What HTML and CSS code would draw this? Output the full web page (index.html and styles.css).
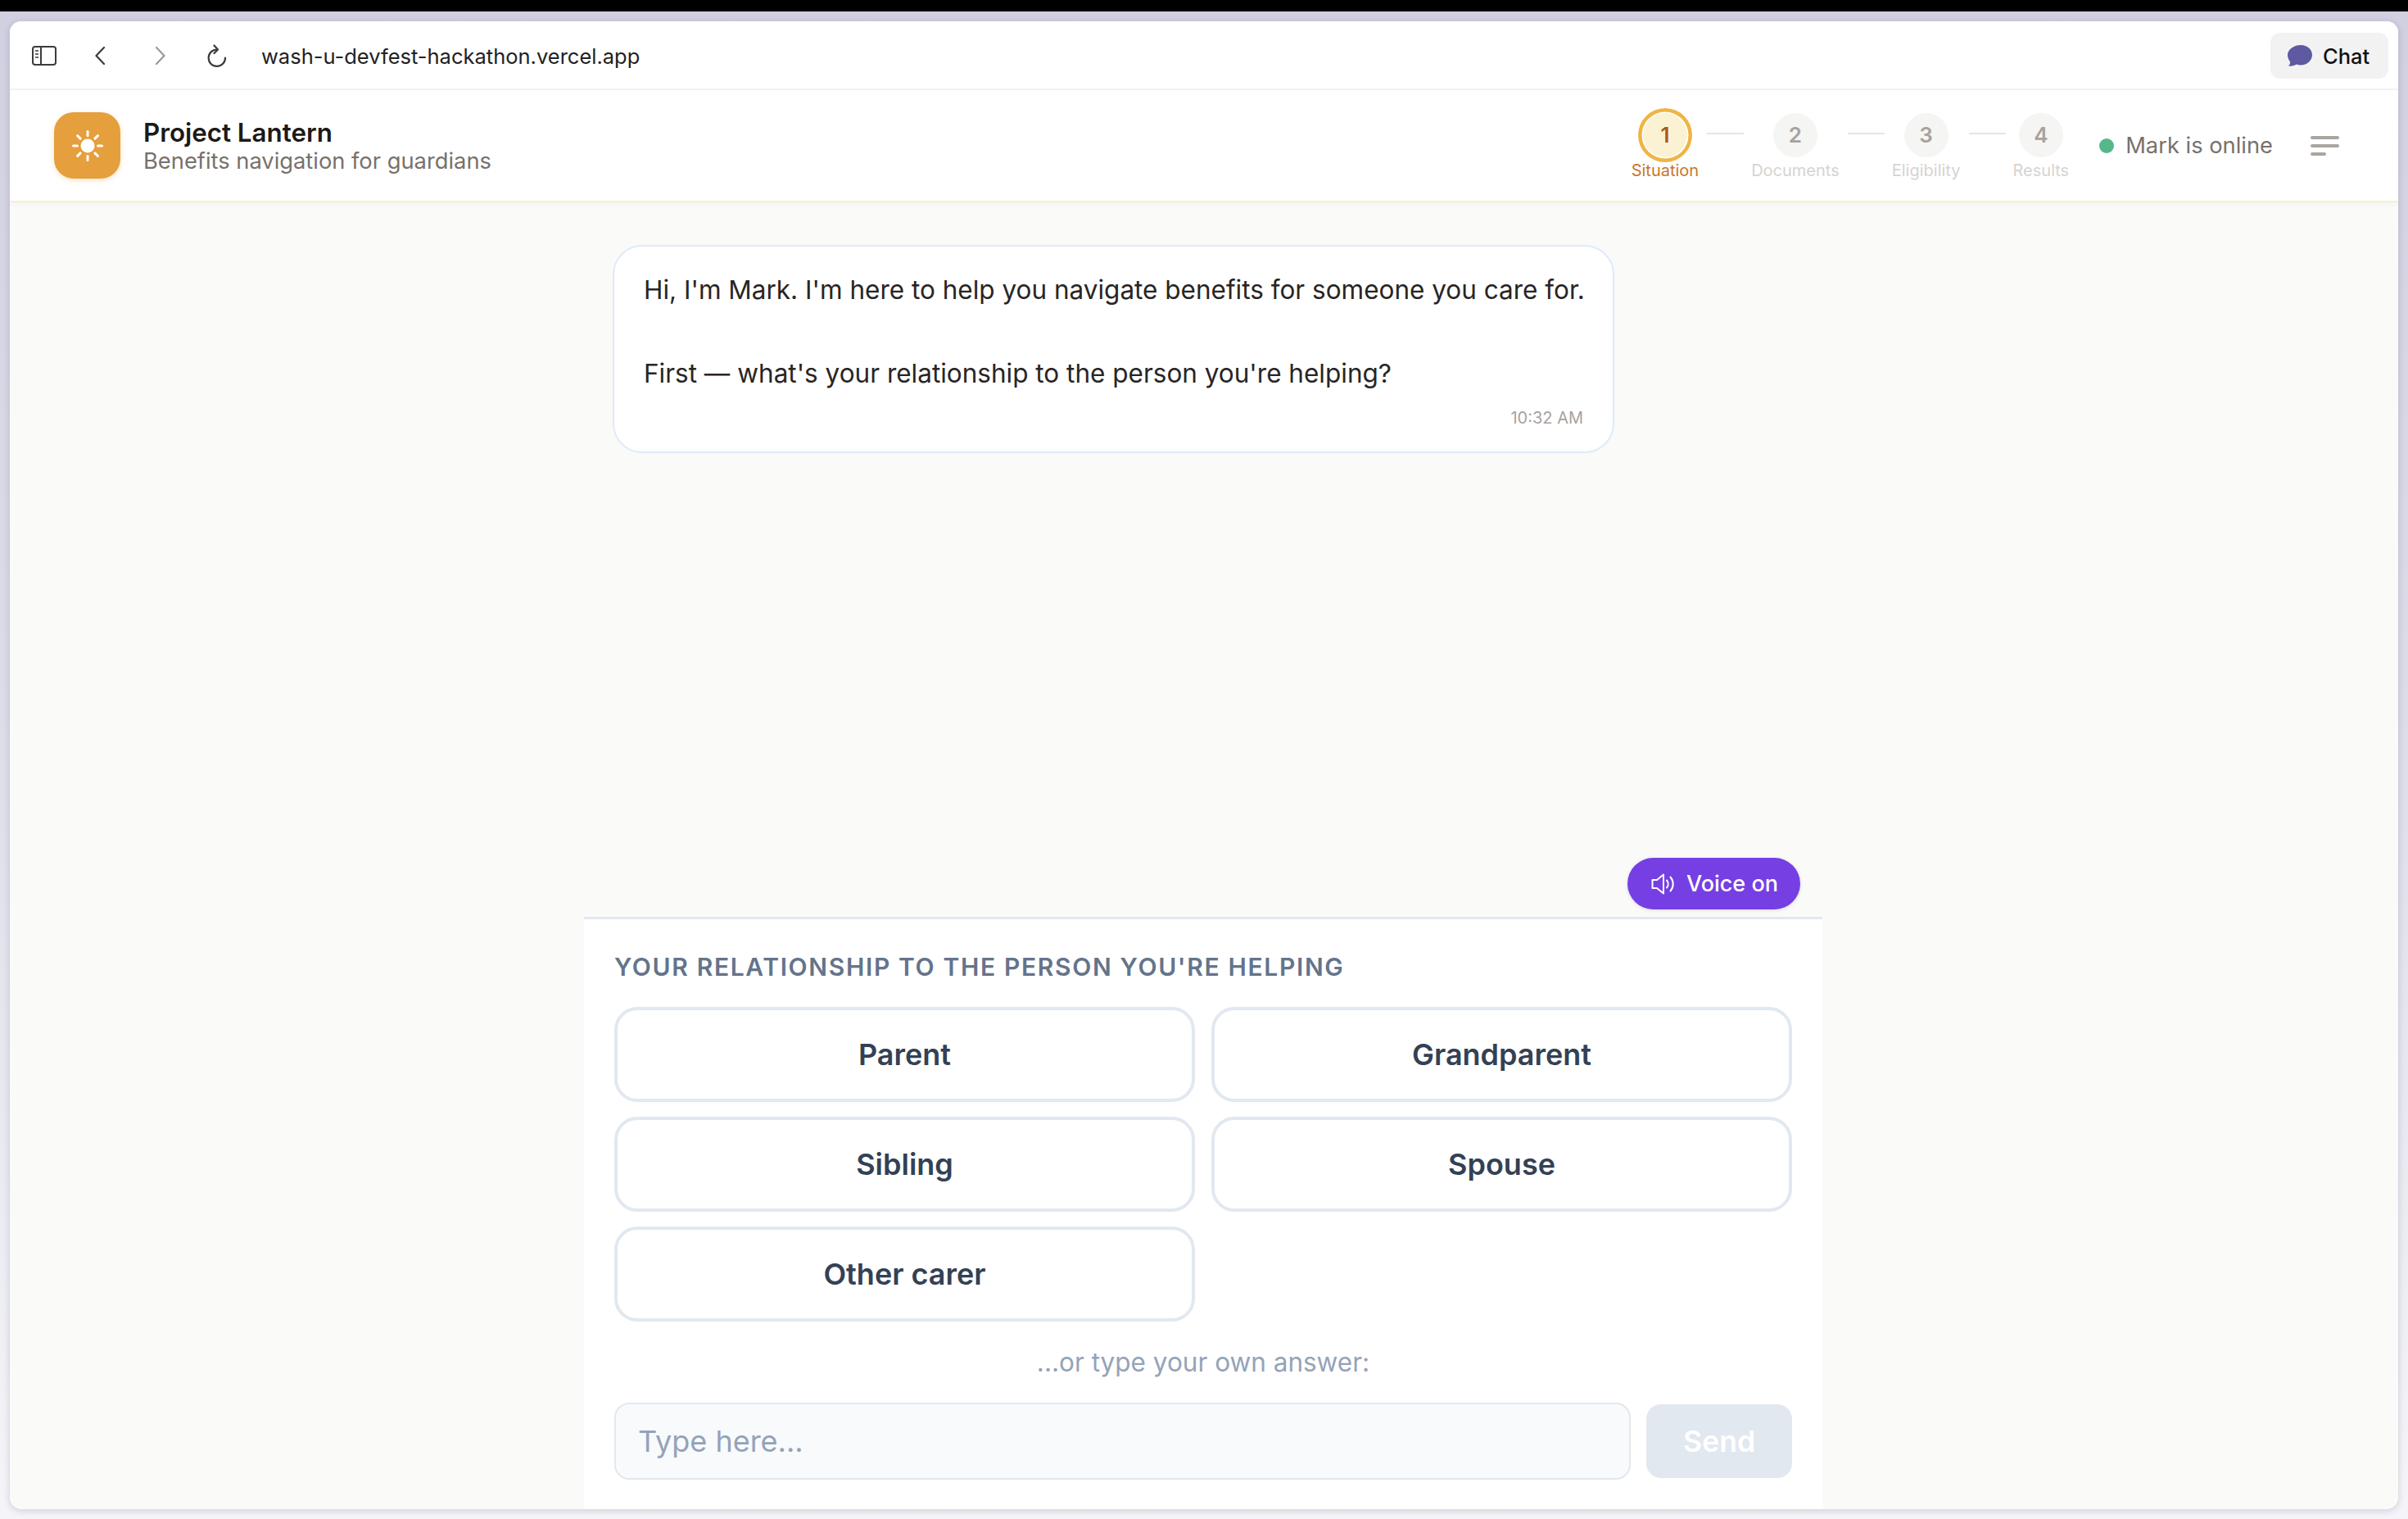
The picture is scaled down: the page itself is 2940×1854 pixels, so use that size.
FILE: index.html
```html
<!DOCTYPE html>
<html lang="en">
<head>
    <meta charset="UTF-8">
    <meta name="viewport" content="width=device-width, initial-scale=1.0">
    <title>Project Lantern</title>
    <link rel="stylesheet" href="styles.css">
</head>
<body>
    <div class="topstrip"></div>
    <div class="window">
        <div class="toolbar">
            <div class="tools">
                <svg class="tool-sidebar" width="30" height="24" viewBox="0 0 30 24" fill="none" stroke="#3c3c3e" stroke-width="2">
                    <rect x="1" y="1" width="28" height="22" rx="3"/>
                    <path d="M11 1v22"/>
                    <path d="M4 6h4M4 10h4M4 14h4" stroke-width="1.6"/>
                </svg>
                <svg class="tool-back" width="12" height="22" viewBox="0 0 12 22" fill="none" stroke="#3c3c3e" stroke-width="2.2" stroke-linecap="round" stroke-linejoin="round">
                    <path d="M11 1 1.5 11 11 21"/>
                </svg>
                <svg class="tool-forward" width="12" height="22" viewBox="0 0 12 22" fill="none" stroke="#9a9a9c" stroke-width="2.2" stroke-linecap="round" stroke-linejoin="round">
                    <path d="M1 1l9.5 10L1 21"/>
                </svg>
                <svg class="tool-reload" width="24" height="28" viewBox="0 0 24 28" fill="none" stroke="#3c3c3e" stroke-width="2.2" stroke-linecap="round" stroke-linejoin="round">
                    <path d="M12 6.500A10.200 10.200 0 1 0 22 16.500"/>
                    <path d="M8.500 1.500 13 6.500 8.500 11"/>
                </svg>
                <span class="url">wash-u-devfest-hackathon.vercel.app</span>
            </div>
            <div class="chat-btn">
                <svg width="30" height="26" viewBox="0 0 30 26"><path fill="#5d5aa1" d="M16 0C24 0 30 5.400 30 12S24 24.500 16 24.500C14 24.500 12.200 24.200 10.500 23.600C8.500 25.300 5 26 1 25.600C2.500 24 3.200 22.300 3 20.200C1.200 18 0 15.300 0 12C0 5.400 8 0 16 0Z"/></svg>
                <span>Chat</span>
            </div>
        </div>

        <div class="header">
            <div class="brand">
                <div class="logo">
                    <svg width="40" height="40" viewBox="0 0 40 40" stroke="#fff" stroke-width="3" stroke-linecap="round">
                        <circle cx="20" cy="20" r="8.500" fill="#fff" stroke="none"/>
                        <path d="M20 2.500v5M20 32.500v5M2.500 20h5M32.500 20h5M7.600 7.600l3.500 3.500M28.900 28.900l3.500 3.500M7.600 32.400l3.500-3.500M28.900 11.100l3.500-3.500"/>
                    </svg>
                </div>
                <div>
                    <div class="brand-name">Project Lantern</div>
                    <div class="brand-sub">Benefits navigation for guardians</div>
                </div>
            </div>
            <div class="header-right">
                <div class="steps">
                    <div class="step active"><div class="step-num">1</div><div class="step-label">Situation</div></div>
                    <div class="step-line"></div>
                    <div class="step"><div class="step-num">2</div><div class="step-label">Documents</div></div>
                    <div class="step-line"></div>
                    <div class="step"><div class="step-num">3</div><div class="step-label">Eligibility</div></div>
                    <div class="step-line"></div>
                    <div class="step"><div class="step-num">4</div><div class="step-label">Results</div></div>
                </div>
                <div class="status"><span class="dot"></span>Mark is online</div>
                <div class="menu"><i></i><i></i><i class="short"></i></div>
            </div>
        </div>

        <div class="main">
            <div class="column">
                <div class="messages">
                    <div class="bubble">
                        <p>Hi, I'm Mark. I'm here to help you navigate benefits for someone you care for.</p>
                        <p class="second">First — what's your relationship to the person you're helping?</p>
                        <div class="time">10:32 AM</div>
                    </div>
                </div>
                <div class="voice-row">
                    <div class="voice-btn">
                        <svg width="28" height="26" viewBox="0 0 28 26" fill="none" stroke="#fff" stroke-width="2" stroke-linecap="round" stroke-linejoin="round">
                            <path d="M15 1.500 7 8H1.500v10H7l8 6.500V1.500z"/>
                            <path d="M19 8.500a7 7 0 0 1 0 9"/>
                            <path d="M23.500 4.500a13 13 0 0 1 0 17"/>
                        </svg>
                        <span>Voice on</span>
                    </div>
                </div>
                <div class="panel">
                    <div class="panel-label">YOUR RELATIONSHIP TO THE PERSON YOU'RE HELPING</div>
                    <div class="choices">
                        <div class="choice">Parent</div>
                        <div class="choice">Grandparent</div>
                        <div class="choice">Sibling</div>
                        <div class="choice">Spouse</div>
                        <div class="choice">Other carer</div>
                    </div>
                    <div class="or-type">...or type your own answer:</div>
                    <div class="answer">
                        <input class="answer-input" type="text" placeholder="Type here...">
                        <div class="send">Send</div>
                    </div>
                </div>
            </div>
        </div>
    </div>
</body>
</html>
```

FILE: styles.css
```css
*{margin:0px;padding:0px;box-sizing:border-box;font-family:Inter,"Noto Sans",sans-serif;}

html,body{height:100%;}

body{
    background:linear-gradient(180deg,#d1d0e1 0%,#dcdce8 45%,#f4f4f9 100%);
    overflow:hidden;
}

.topstrip{height:14px;background:#000;}

.window{
    margin:12px 12px 0px 12px;
    height:1816px;
    border-radius:14px;
    overflow:hidden;
    background:#fafaf8;
    box-shadow:0px 2px 8px rgba(40,40,70,.18);
    display:flex;
    flex-direction:column;
}

/* browser bar */
.toolbar{
    height:84px;
    flex:none;
    background:#fff;
    border-bottom:2px solid #f3f3f4;
    display:flex;
    justify-content:space-between;
    align-items:center;
    padding:2px 12px 0px 27px;
}

.tools{display:flex;align-items:center;}
.tools svg{flex:none;}
.tool-back{margin-left:47px;}
.tool-forward{margin-left:62px;}
.tool-reload{margin-left:51px;}

.url{margin-left:42px;font-size:25.500px;color:#222;}

.chat-btn{
    width:144px;
    height:56px;
    background:#f2f2f3;
    border-radius:12px;
    display:flex;
    align-items:center;
    gap:13px;
    padding-left:21px;
    font-size:25.500px;
    font-weight:500;
    color:#111;
}

/* app header */
.header{
    height:137px;
    flex:none;
    background:#fff;
    border-bottom:2px solid #faeecb;
    box-shadow:0px 2px 6px rgba(0,0,0,.03);
    display:flex;
    justify-content:space-between;
    align-items:center;
    padding:0px 72px 0px 54px;
}

.brand{display:flex;align-items:center;gap:28px;}

.logo{
    width:81px;
    height:81px;
    border-radius:24px;
    background:#e59f3c;
    box-shadow:0px 2px 6px rgba(229,159,60,.3);
    display:flex;
    justify-content:center;
    align-items:center;
}

.brand-name{font-size:31.300px;font-weight:600;line-height:36px;color:#1c1917;}
.brand-sub{font-size:27.300px;line-height:30px;margin-top:2px;color:#78716c;}

.header-right{display:flex;align-items:center;}

.steps{display:flex;align-items:flex-start;}

.step{display:flex;flex-direction:column;align-items:center;}

.step-num{
    width:54px;
    height:54px;
    border-radius:50%;
    background:#f5f5f4;
    color:#a8a29e;
    font-size:26px;
    font-weight:600;
    display:flex;
    justify-content:center;
    align-items:center;
}

.step-label{margin-top:6px;font-size:20px;line-height:20px;color:#d6d3d1;white-space:nowrap;}

.step.active .step-num{
    background:#fbf2d4;
    color:#a85a1e;
    box-shadow:0px 0px 0px 1.500px #fff,0px 0px 0px 6px #eeb544;
}
.step.active .step-label{color:#c8762a;}

.step-line{width:45px;height:2px;background:#e7e5e4;margin:24px 9px 0px 10px;}

.status{
    display:flex;
    align-items:center;
    margin-left:37px;
    font-size:27.300px;
    color:#78716c;
}

.dot{width:18px;height:18px;border-radius:50%;background:#55b88a;margin-right:14px;}

.menu{display:flex;flex-direction:column;gap:6px;margin-left:46px;}
.menu i{display:block;width:35px;height:4px;border-radius:2px;background:#aaa5a0;}
.menu i.short{width:19px;}

/* chat */
.main{flex:1;min-height:0;display:flex;justify-content:center;padding-right:2px;}

.column{width:1512px;display:flex;flex-direction:column;}

.messages{flex:1;padding:52px 35px 0px 35px;}

.bubble{
    width:1223px;
    height:254px;
    background:#fff;
    border:2px solid #dfeafa;
    border-radius:36px;
    padding:27px 36px;
}

.bubble p{font-size:31.500px;line-height:51px;color:#292524;white-space:nowrap;}
.bubble .second{margin-top:51px;}

.time{text-align:right;font-size:20px;line-height:24px;color:#a8a29e;margin-top:17px;}

.voice-row{display:flex;justify-content:flex-end;padding:0px 27px 9px 0px;}

.voice-btn{
    width:211px;
    height:63px;
    border-radius:32px;
    background:#763fe3;
    box-shadow:0px 1px 4px rgba(60,30,120,.15);
    color:#fff;
    display:flex;
    align-items:center;
    gap:15px;
    padding-left:29px;
    font-size:27px;
    font-weight:500;
}

.panel{
    flex:none;
    height:723px;
    background:#fff;
    border-top:3px solid #e2e8f0;
    padding:38px 37px 0px 37px;
}

.panel-label{font-size:30px;line-height:40px;font-weight:600;letter-spacing:1.650px;color:#64748b;white-space:nowrap;}

.choices{display:grid;grid-template-columns:709px 709px;gap:18px 20px;margin-top:29px;}

.choice{
    height:116px;
    border:4px solid #e2e8f0;
    border-radius:28px;
    background:#fff;
    display:flex;
    justify-content:center;
    align-items:center;
    font-size:36px;
    font-weight:600;
    color:#334155;
}

.or-type{text-align:center;font-size:31.500px;line-height:40px;color:#94a3b8;margin-top:30px;}

.answer{display:flex;align-items:center;gap:19px;margin-top:29px;}

.answer-input{
    width:1242px;
    height:94px;
    background:#f8fafc;
    border:2px solid #e2e8f0;
    border-radius:18px;
    padding:0px 27px;
    font-size:36px;
    outline:none;
}
.answer-input::placeholder{color:#94a3b8;opacity:1;}

.send{
    width:178px;
    height:90px;
    background:#e2e8f0;
    border-radius:18px;
    color:#fff;
    font-size:35.500px;
    font-weight:600;
    display:flex;
    justify-content:center;
    align-items:center;
}
```
